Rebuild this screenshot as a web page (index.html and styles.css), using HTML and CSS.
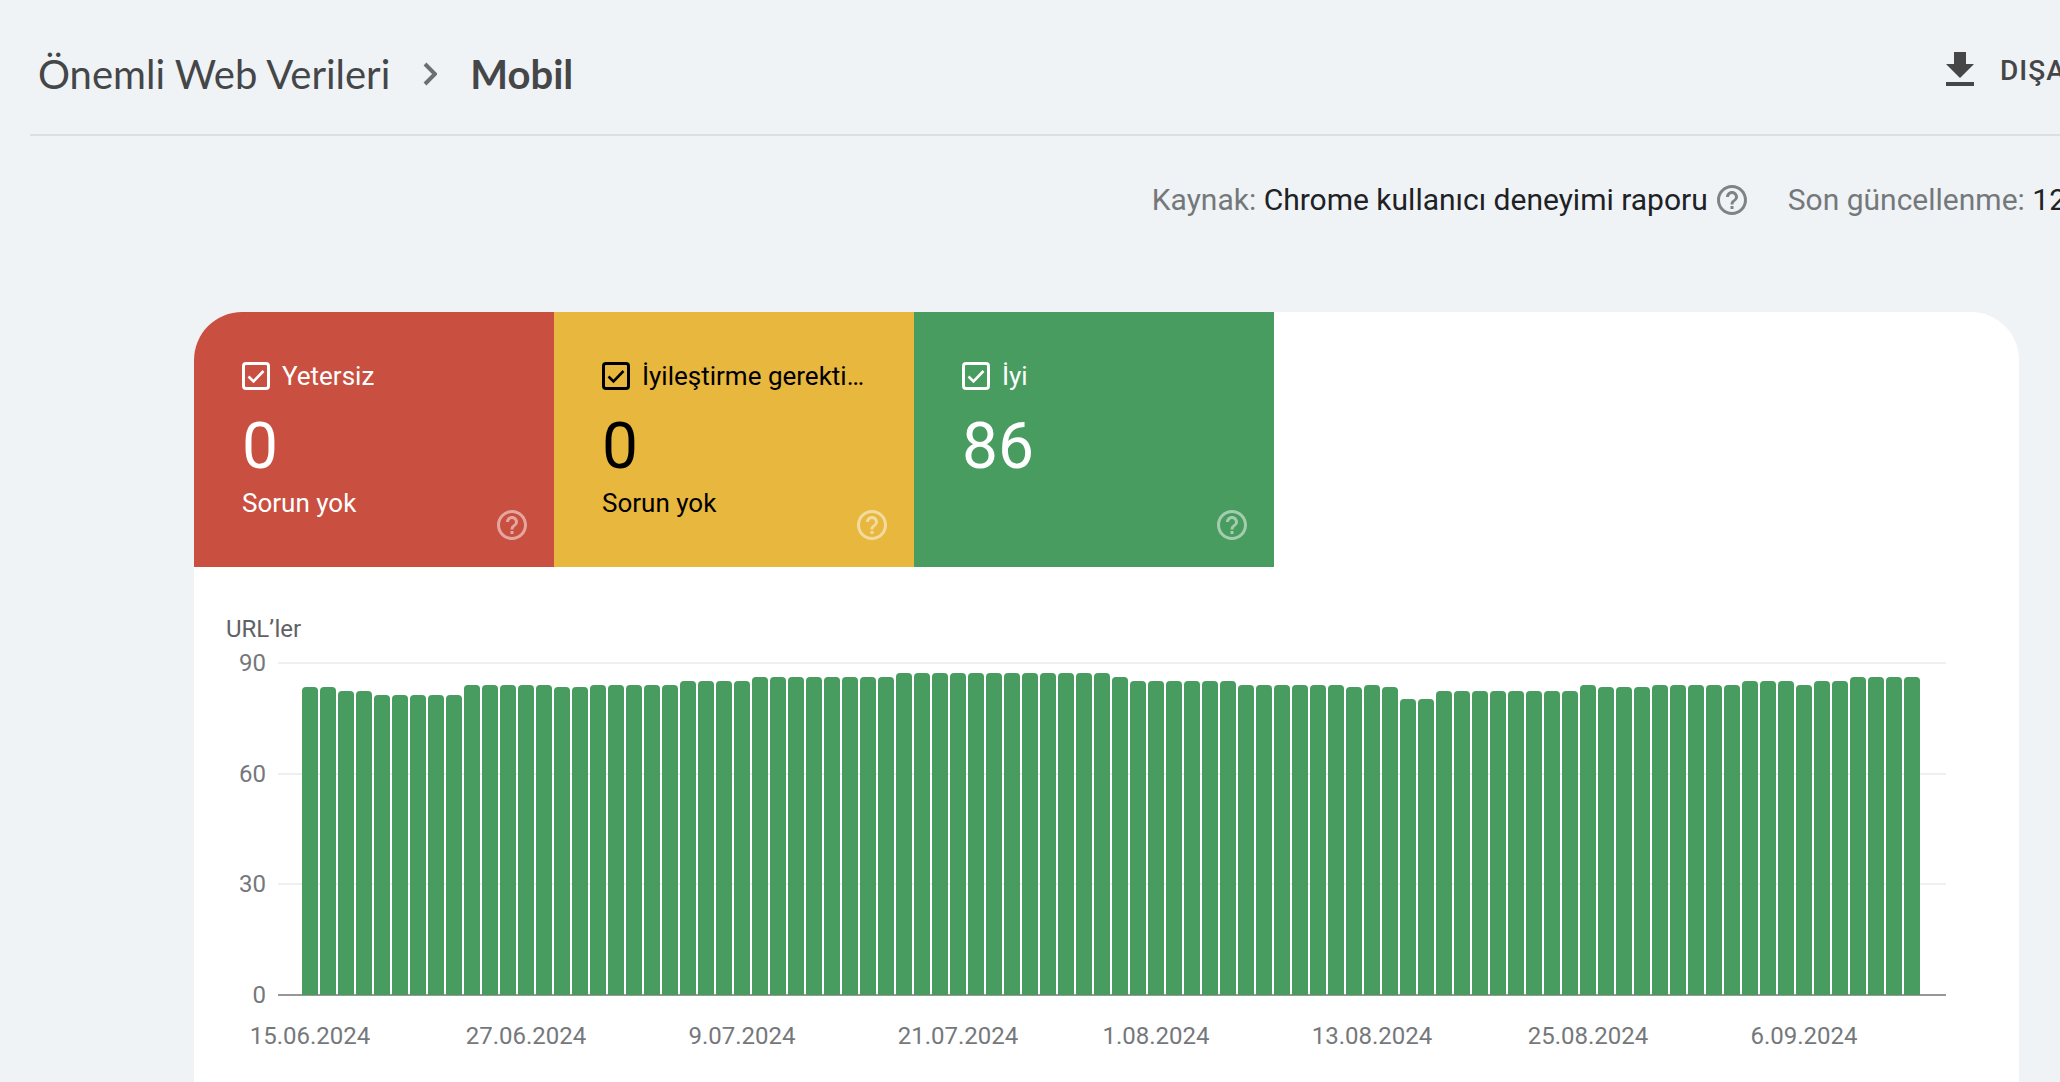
FILE: index.html
```html
<!DOCTYPE html>
<html lang="tr">
<head>
<meta charset="utf-8">
<title>Önemli Web Verileri – Mobil</title>
<link rel="stylesheet" href="styles.css">
</head>
<body>
<svg class="sprite" aria-hidden="true">
  <symbol id="help" viewBox="0 0 24 24"><path d="M11 18h2v-2h-2v2zm1-16C6.48 2 2 6.48 2 12s4.480 10 10 10 10-4.480 10-10S17.520 2 12 2zm0 18c-4.410 0-8-3.590-8-8s3.590-8 8-8 8 3.590 8 8-3.590 8-8 8zm0-14c-2.210 0-4 1.790-4 4h2c0-1.100.9-2 2-2s2 .9 2 2c0 2-3 1.750-3 5h2c0-2.250 3-2.500 3-5 0-2.210-1.790-4-4-4z"/></symbol>
  <symbol id="tick" viewBox="0 0 28 28"><path d="M6.500 14.500l5 5L21.500 9" fill="none" stroke="currentColor" stroke-width="2.600"/></symbol>
</svg>

<header class="topbar">
  <nav class="crumbs" aria-label="İçerik haritası">
    <a class="crumb" href="#">Önemli Web Verileri</a>
    <svg class="chevron" viewBox="0 0 14 24" aria-hidden="true"><path d="M2 2l10 10L2 22"/></svg>
    <h1 class="crumb-current">Mobil</h1>
  </nav>
  <button class="export" type="button">
    <svg class="export-icon" viewBox="0 0 24 24" aria-hidden="true"><path d="M19 9h-4V3H9v6H5l7 7 7-7zM5 18v2h14v-2H5z"/></svg>
    <span>DIŞA</span>
  </button>
</header>

<div class="meta">
  <p class="meta-item">Kaynak: <b>Chrome kullanıcı deneyimi raporu</b></p>
  <button class="help meta-help" type="button" aria-label="Yardım"><svg viewBox="0 0 24 24"><use href="#help"/></svg></button>
  <p class="meta-item">Son güncellenme: <b>12</b></p>
</div>

<main class="card">
  <section class="tiles">
    <div class="tile tile-poor">
      <label class="tile-label"><span class="check"><input type="checkbox" checked><svg><use href="#tick"/></svg></span>Yetersiz</label>
      <p class="tile-value">0</p>
      <p class="tile-note">Sorun yok</p>
      <button class="help tile-help" type="button" aria-label="Yardım"><svg viewBox="0 0 24 24"><use href="#help"/></svg></button>
    </div>
    <div class="tile tile-fair">
      <label class="tile-label"><span class="check"><input type="checkbox" checked><svg><use href="#tick"/></svg></span>İyileştirme gerekti…</label>
      <p class="tile-value">0</p>
      <p class="tile-note">Sorun yok</p>
      <button class="help tile-help" type="button" aria-label="Yardım"><svg viewBox="0 0 24 24"><use href="#help"/></svg></button>
    </div>
    <div class="tile tile-good">
      <label class="tile-label"><span class="check"><input type="checkbox" checked><svg><use href="#tick"/></svg></span>İyi</label>
      <p class="tile-value">86</p>
      <button class="help tile-help" type="button" aria-label="Yardım"><svg viewBox="0 0 24 24"><use href="#help"/></svg></button>
    </div>
  </section>

  <section class="chart">
    <h2 class="chart-title">URL’ler</h2>
    <div class="y-axis"><span>90</span><span>60</span><span>30</span><span>0</span></div>
    <div class="plot">
      <div class="gridlines"><i></i><i></i><i></i><i></i></div>
      <div class="bars" id="bars"></div>
    </div>
    <div class="x-axis" id="dates"></div>
  </section>
</main>
<script src="chart.js"></script>
</body>
</html>
```
FILE: styles.css
```css
* { box-sizing: border-box; }

body {
  margin: 0;
  background: #eff3f6;
  font-family: Roboto, "Liberation Sans", sans-serif;
  font-size: 24px;
  color: #202124;
  overflow-x: hidden;
}

h1, h2, p { margin: 0; font-weight: 400; }
button { border: 0; padding: 0; background: none; font: inherit; color: inherit; cursor: pointer; }
.sprite { display: none; }

.topbar {
  display: flex;
  align-items: center;
  justify-content: space-between;
  height: 136px;
  margin-left: 30px;
  padding-left: 8px;
  border-bottom: 2px solid #dbdfe1;
  color: #444648;
}

.crumbs {
  display: flex;
  align-items: center;
  padding-top: 14px;
  font-family: Lato, Roboto, sans-serif;
  font-size: 40px;
  line-height: 48px;
}
.crumb { color: inherit; text-decoration: none; }
.crumb-current { font-size: 40px; font-weight: 700; }
.chevron {
  width: 14px;
  height: 24px;
  margin: 0 33px;
  fill: none;
  stroke: #6c6f72;
  stroke-width: 4px;
}

.export {
  display: flex;
  align-items: center;
  gap: 16px;
  width: 124px;
  padding-top: 6px;
  font-size: 28px;
  font-weight: 500;
  letter-spacing: 1px;
  white-space: nowrap;
}
.export-icon { flex: none; width: 48px; height: 48px; fill: currentColor; }

.meta {
  display: flex;
  align-items: center;
  justify-content: flex-end;
  height: 128px;
  margin-right: -6px;
  font-size: 30px;
  line-height: 36px;
  color: #75787b;
}
.meta-item { white-space: nowrap; }
.meta-item b { font-weight: 400; color: #202124; }

.help { display: block; width: 36px; height: 36px; }
.help svg { display: block; width: 36px; height: 36px; fill: currentColor; }
.meta-help { margin: 0 38px 0 6px; color: #808386; }

.card {
  margin: 48px 41px 0 194px;
  min-height: 770px;
  border-radius: 48px 48px 0 0;
  background: #fff;
  overflow: hidden;
}

.tiles { display: flex; }
.tile {
  position: relative;
  width: 360px;
  height: 255px;
  padding: 48px 24px 0 48px;
  font-size: 26px;
  line-height: 32px;
}
.tile-poor { background: #c94f40; color: #fff; }
.tile-fair { background: #e8b73e; color: #000; }
.tile-good { background: #489c5f; color: #fff; }

.tile-label { display: flex; align-items: center; gap: 12px; white-space: nowrap; }
.check { display: grid; width: 28px; height: 28px; }
.check > * { grid-area: 1 / 1; width: 28px; height: 28px; margin: 0; }
.check input { appearance: none; border: 3px solid; border-radius: 4px; color: inherit; }
.check svg { pointer-events: none; }
.tile-value { margin-top: 19px; font-size: 64px; line-height: 72px; }
.tile-note { margin-top: 4px; }
.tile-help { position: absolute; right: 24px; bottom: 24px; color: #fff; opacity: 0.5; }

.chart {
  display: grid;
  grid-template-columns: 40px 1fr;
  column-gap: 12px;
  padding: 48px 73px 0 32px;
  line-height: 28px;
  color: #75787b;
}
.chart-title { grid-column: 1 / -1; height: 47px; font-size: 24px; line-height: 28px; color: #5f6265; }

.y-axis {
  display: flex;
  flex-direction: column;
  justify-content: space-between;
  height: 360px;
  margin: -13px 0;
  text-align: right;
}

.plot { display: grid; height: 334px; }
.plot > * { grid-area: 1 / 1; }
.gridlines { display: flex; flex-direction: column; justify-content: space-between; }
.gridlines i { height: 2px; background: #eeefef; }
.gridlines i:last-child { background: #979797; }

.bars {
  display: flex;
  align-items: flex-end;
  gap: 2px;
  padding: 0 26px 1px 24px;
}
.bar { flex: 1; border-radius: 4px 4px 0 0; background: #489c5f; }

.x-axis {
  grid-column: 2;
  display: grid;
  grid-template-columns: repeat(90, minmax(0, 1fr));
  column-gap: 2px;
  padding: 26px 26px 0 24px;
}
.x-axis span { grid-row: 1; justify-self: center; white-space: nowrap; }
```
FILE: chart.js
```js
// Daily count of good URLs as [value, number of days].
const runs = [
  [83, 2], [82, 2], [81, 5], [84, 5], [83, 2], [84, 5], [85, 4], [86, 8],
  [87, 12], [86, 1], [85, 6], [84, 6], [83, 1], [84, 1], [83, 1], [80, 2],
  [82, 8], [84, 1], [83, 3], [84, 5], [85, 3], [84, 1], [85, 2], [86, 4]
];
const bars = document.getElementById('bars');
for (const [value, days] of runs) {
  for (let i = 0; i < days; i++) {
    const bar = document.createElement('div');
    bar.className = 'bar';
    bar.style.height = 2 * Math.ceil(value / 90 * 166) + 'px';
    bars.append(bar);
  }
}

// Tick labels, keyed by day number.
const ticks = [
  [1, '15.06.2024'], [13, '27.06.2024'], [25, '9.07.2024'], [37, '21.07.2024'],
  [48, '1.08.2024'], [60, '13.08.2024'], [72, '25.08.2024'], [84, '6.09.2024']
];
const dates = document.getElementById('dates');
for (const [day, text] of ticks) {
  const label = document.createElement('span');
  label.textContent = text;
  label.style.gridColumn = day;
  dates.append(label);
}
```
